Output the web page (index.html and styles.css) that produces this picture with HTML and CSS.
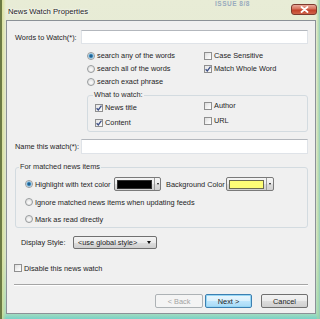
FILE: index.html
```html
<!DOCTYPE html>
<html>
<head>
<meta http-equiv="Content-Type" content="text/html; charset=utf-8">
<title>News Watch Properties</title>
<link rel="stylesheet" href="styles.css">
</head>

<body>

<div class="glass">
  <div class="titlebar">
    <span class="titlebar__ghost">ISSUE 8/8</span>
    <span class="titlebar__title">News Watch Properties</span>
    <span class="titlebar__close">
      <svg width="9" height="7" viewBox="0 0 9 7"><path d="M1.5 1 L7.5 6 M7.5 1 L1.5 6" stroke="#fff" stroke-width="1.8" stroke-linecap="round"/></svg>
    </span>
  </div>

  <div class="client">
    <div class="field-row">
      <label class="field-row__label">Words to Watch(*):</label>
      <span class="textbox"></span>
    </div>

    <div class="options">
      <span class="opt"><i class="radio radio--on"></i>search any of the words</span>
      <span class="opt opt--check"><i class="check"></i>Case Sensitive</span>
      <span class="opt"><i class="radio"></i>search all of the words</span>
      <span class="opt opt--check"><i class="check check--on"><svg width="6" height="6" viewBox="0 0 6 6"><path d="M0.6 3.2 L2.3 5 L5.5 0.6" fill="none" stroke="#3d4f86" stroke-width="1.3"/></svg></i>Match Whole Word</span>
      <span class="opt"><i class="radio"></i>search exact phrase</span>
    </div>

    <fieldset class="group group--watch">
      <legend class="group__legend">What to watch:</legend>
      <div class="watch-grid">
        <span class="opt opt--check"><i class="check check--on"><svg width="6" height="6" viewBox="0 0 6 6"><path d="M0.6 3.2 L2.3 5 L5.5 0.6" fill="none" stroke="#3d4f86" stroke-width="1.3"/></svg></i>News title</span>
        <span class="opt opt--check opt--raised"><i class="check"></i>Author</span>
        <span class="opt opt--check"><i class="check check--on"><svg width="6" height="6" viewBox="0 0 6 6"><path d="M0.6 3.2 L2.3 5 L5.5 0.6" fill="none" stroke="#3d4f86" stroke-width="1.3"/></svg></i>Content</span>
        <span class="opt opt--check opt--raised"><i class="check"></i>URL</span>
      </div>
    </fieldset>

    <div class="field-row field-row--name">
      <label class="field-row__label">Name this watch(*):</label>
      <span class="textbox"></span>
    </div>

    <fieldset class="group group--matched">
      <legend class="group__legend">For matched news items</legend>
      <div class="matched-row matched-row--first">
        <span class="opt"><i class="radio radio--on"></i><span class="matched-row__text">Highlight with text color</span></span>
        <span class="combo"><span class="combo__swatch combo__swatch--black"></span><span class="combo__arrow"></span></span>
        <span class="matched-row__bg">Background Color</span>
        <span class="combo combo--wide"><span class="combo__swatch combo__swatch--yellow"></span><span class="combo__arrow"></span></span>
      </div>
      <div class="matched-row matched-row--second">
        <span class="opt"><i class="radio"></i>Ignore matched news items when updating feeds</span>
      </div>
      <div class="matched-row matched-row--third">
        <span class="opt"><i class="radio"></i>Mark as read directly</span>
      </div>
    </fieldset>

    <div class="display-row">
      <span class="display-row__label">Display Style:</span>
      <span class="select">&lt;use global style&gt;<i class="select__arrow"></i></span>
    </div>

    <div class="disable-row">
      <span class="opt opt--check"><i class="check"></i>Disable this news watch</span>
    </div>

    <div class="separator"></div>

    <div class="buttons">
      <span class="btn btn--disabled">&lt; Back</span>
      <span class="btn btn--default">Next &gt;</span>
      <span class="btn btn--cancel">Cancel</span>
    </div>
  </div>
</div>

</body>
</html>
```

FILE: styles.css
```css
/* reset */
body,div,fieldset,legend,label,p{margin:0;padding:0}
i{font-style:normal}

html,body{font-family:"Liberation Sans",Arial,sans-serif;font-size:7.35px;color:#1e1e1e;white-space:nowrap;}
body{width:320px;height:319px;overflow:hidden;background:linear-gradient(180deg,#e8ecd6 0,#e3e9d2 40%,#d9e6cc 80%,#a9dcc4 98%,#8fd2c2 100%);}

/* window glass */
.glass{
  position:relative;
  height:319px;
  box-sizing:border-box;
  border-left:2px solid #6c7a44;
  background:
    linear-gradient(90deg,rgba(214,222,140,.8) 0,rgba(214,222,140,0) 4px),
    linear-gradient(270deg,rgba(140,200,190,.9) 0,rgba(170,215,150,.6) 2px,rgba(170,215,150,0) 4px),
    linear-gradient(0deg,rgba(120,210,200,.9) 0,rgba(150,220,190,.5) 4px,rgba(150,220,190,0) 6px);
}

.titlebar{display:flex;align-items:flex-start;height:20px;padding:0 3px 0 6px;box-sizing:border-box;}
.titlebar__title{margin-top:7px;font-size:7.7px;line-height:10px;color:#1c1c1c;text-shadow:0 0 3px #fff,0 0 2px #fff;}
.titlebar__ghost{position:absolute;left:213px;top:0;font-size:6.5px;line-height:7px;font-weight:bold;color:#4a6aa8;opacity:.5;letter-spacing:.5px;}
.titlebar__close{
  margin:4px 0 0 auto;
  width:26px;height:11px;
  box-sizing:border-box;
  display:flex;align-items:center;justify-content:center;
  border:1px solid #7d3a2e;border-radius:3px;
  background:linear-gradient(180deg,#e9a99a 0,#d66f58 45%,#c2402a 55%,#d0634a 100%);
}

/* client area */
.client{
  margin:0 4px 0 4px;
  height:294px;
  box-sizing:border-box;
  border:1px solid #8b9197;
  background:#f0f0f0;
  padding:9px 7px 0 7px;
}

.field-row{display:flex;align-items:center;height:14px;}
.field-row--name{margin-top:7px;height:15px;}
.field-row__label{flex:none;width:67px;padding-left:1px;box-sizing:border-box;}
.textbox{flex:1;align-self:stretch;background:#fff;border:1px solid #dfe3e8;border-top-color:#b3b7bd;}

.opt{display:flex;align-items:center;gap:2px;}
.radio{
  flex-shrink:0;width:8px;height:8px;box-sizing:border-box;border-radius:50%;
  border:1px solid #979a9c;
  background:radial-gradient(circle at 50% 60%,#fdfdfd 0,#e4e4e4 3px,#f3f3f3 4px);
}
.radio--on{background:radial-gradient(circle at 50% 50%,#174a74 0,#2f79ad 1.4px,#7fbde3 2.2px,#e9eef1 3px,#f7f7f7 4px);}
.check{
  flex-shrink:0;width:8px;height:8px;box-sizing:border-box;
  display:flex;align-items:center;justify-content:center;
  border:1px solid #8f8f8f;
  background:linear-gradient(135deg,#dcdcdc 0,#f4f4f4 60%,#fff 100%);
}
.check--on{background:linear-gradient(135deg,#e6e6e6 0,#fafafa 100%);}

.options{display:grid;grid-template-columns:117px auto;grid-auto-rows:13px;align-items:center;margin:5px 0 0 73px;}

/* group boxes */
.group{border:1px solid #d3dbe0;border-radius:3px;min-width:0;}
.group__legend{line-height:10px;padding:0 1px;color:#2a2a2a;}

.group--watch{margin:2px 0 0 73px;padding:0 0 1px 7px;}
.group--watch .group__legend{margin-left:-2px;}
.watch-grid{display:grid;grid-template-columns:109px auto;grid-auto-rows:15px;align-items:center;}
.opt--raised{margin-bottom:4px;}

.group--matched{margin:8px 0 0 1px;padding:0 0 1px 9px;}
.group--matched .group__legend{margin-left:-6px;}
.matched-row{display:flex;align-items:center;height:14px;}
.matched-row--first{margin-top:5px;}
.matched-row--second{margin-top:4px;}
.matched-row--third{margin-top:3px;}
.matched-row__text{width:79px;}
.matched-row__bg{margin-left:5px;width:60px;}

.combo{
  flex:none;
  width:47px;height:14px;box-sizing:border-box;
  display:flex;align-items:center;gap:1px;padding:0 0 0 2px;
  border:1px solid #7a7a7a;border-radius:2px;
  background:linear-gradient(180deg,#f4f4f4 0,#ebebeb 50%,#dcdcdc 51%,#d0d0d0 100%);
}
.combo--wide{width:48px;}
.combo__swatch{width:35px;height:9px;box-sizing:border-box;border:1px solid #303030;}
.combo__swatch--black{background:#000;}
.combo__swatch--yellow{background:#fdfd76;border-color:#6a6a50;}
.combo__arrow{
  flex:1;align-self:stretch;position:relative;
  border-left:1px solid #9a9a9a;margin-left:1px;
}
.combo__arrow::after{content:'';position:absolute;left:2px;top:5px;border:1.5px solid transparent;border-top:2px solid #111;border-bottom:0;}

.display-row{display:flex;align-items:center;height:13px;margin-top:8px;padding-left:7px;}
.display-row__label{width:52px;}
.select{
  position:relative;
  width:84px;height:13px;box-sizing:border-box;
  display:flex;align-items:center;padding-left:4px;
  border:1px solid #707070;border-radius:2px;
  background:linear-gradient(180deg,#f3f3f3 0,#ebebeb 50%,#dddddd 51%,#cfcfcf 100%);
}
.select__arrow{position:absolute;right:5px;top:4px;border:2.5px solid transparent;border-top:3px solid #111;border-bottom:0;}

.disable-row{display:flex;align-items:center;height:12px;margin:13px 0 0 0;}

.separator{margin-top:10px;height:1px;background:#a5a5a5;border-bottom:1px solid #fff;}

.buttons{display:flex;justify-content:flex-end;margin-top:8px;}
.btn{
  width:47px;height:14px;box-sizing:border-box;
  display:flex;align-items:center;justify-content:center;
  border:1px solid #707070;border-radius:2px;
  background:linear-gradient(180deg,#f2f2f2 0,#ebebeb 50%,#dddddd 51%,#cfcfcf 100%);
  color:#1e1e1e;
}
.btn--disabled{width:48px;border-color:#adb2b5;background:#f4f4f4;color:#a3a3a3;}
.btn--default{margin-left:2px;border-color:#3c7fb1;box-shadow:inset 0 0 0 1px #97d7f5;background:linear-gradient(180deg,#eaf6fd 0,#d9f0fc 50%,#bee6fd 51%,#a7d9f5 100%);}
.btn--cancel{margin-left:9px;}
```
